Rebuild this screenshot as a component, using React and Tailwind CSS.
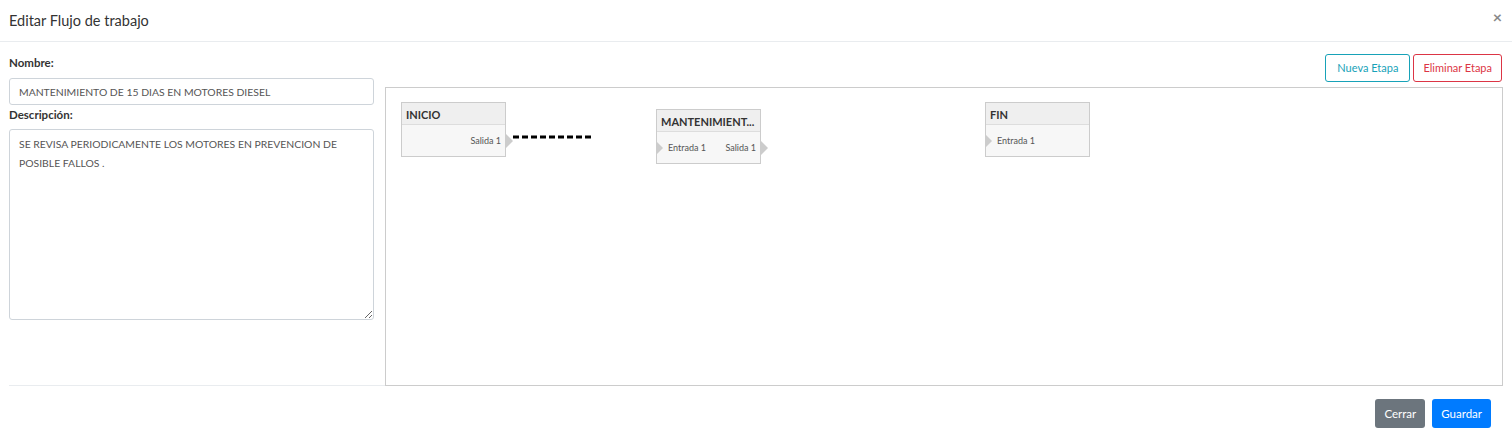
import React from 'react';

const FONT = { fontFamily: 'Lato, "Noto Sans", sans-serif' };

function Port({ side }) {
  return (
    <span
      className={`absolute top-1/2 -translate-y-1/2 w-0 h-0 border-y-[7px] border-y-transparent border-l-[7px] border-l-[#cccccc] ${
        side === 'left' ? '-left-px' : '-right-[8px]'
      }`}
    />
  );
}

function Node({ title, inputs = [], outputs = [], className }) {
  return (
    <div className={`absolute w-[105px] bg-[#f7f7f7] border border-[#cccccc] ${className}`}>
      <div className="h-[22px] px-1 pt-[3px] flex items-center bg-[#efefef] border-b border-[#dddddd] text-[11px] font-bold text-[#333] truncate">
        {title}
      </div>
      <div className="relative h-[31px] flex items-center justify-between px-[11px] text-[9px] text-[#555]">
        <span>
          {inputs.map((i) => (
            <span key={i}>{i}</span>
          ))}
        </span>
        <span className={outputs.length ? '-mr-[7px]' : ''}>
          {outputs.map((o) => (
            <span key={o}>{o}</span>
          ))}
        </span>
        {inputs.length > 0 && <Port side="left" />}
        {outputs.length > 0 && <Port side="right" />}
      </div>
    </div>
  );
}

export default function App() {
  return (
    <div className="w-[1512px] h-[447px] bg-white text-[#212529]" style={FONT}>
      {/* Header */}
      <div className="h-[42px] flex items-center justify-between pl-[9px] pr-[10px] border-b border-[#e9ecef]">
        <h5 className="text-[14.5px] text-[#333]">Editar Flujo de trabajo</h5>
        <button className="text-[16px] font-bold text-[#888] leading-none -mt-2">×</button>
      </div>

      {/* Body */}
      <div className="flex pl-[9px] pr-[10px] pt-[12px]">
        <div className="w-[365px] shrink-0">
          <label className="block text-[11.5px] font-bold text-[#333] h-[24px] leading-[18px]">Nombre:</label>
          <input
            readOnly
            value="MANTENIMIENTO DE 15 DIAS EN MOTORES DIESEL"
            className="block w-full h-[27px] px-[9px] text-[10.4px] text-[#555] border border-[#ced4da] rounded-[3px] outline-none"
            style={FONT}
          />
          <label className="block text-[11.5px] font-bold text-[#333] h-[24px] leading-[20px]">Descripción:</label>
          <textarea
            readOnly
            value="SE REVISA PERIODICAMENTE LOS MOTORES EN PREVENCION DE POSIBLE FALLOS ."
            className="block w-full h-[191px] px-[9px] py-[5px] text-[10.4px] leading-[19px] text-[#555] border border-[#ced4da] rounded-[3px] outline-none resize-y"
            style={FONT}
          />
        </div>

        <div className="flex-1 ml-[11px] flex flex-col">
          <div className="flex justify-end gap-[3px] h-[33px] pb-[5px]">
            <button className="h-[28px] px-[11px] text-[11px] text-[#17a2b8] border border-[#17a2b8] rounded-[3px]">
              Nueva Etapa
            </button>
            <button className="h-[28px] px-[9px] text-[11px] text-[#dc3545] border border-[#dc3545] rounded-[3px]">
              Eliminar Etapa
            </button>
          </div>
          <div className="relative h-[299px] border border-[#cccccc] -mr-px overflow-hidden">
            <Node title="INICIO" outputs={['Salida 1']} className="left-[15px] top-[14px]" />
            <svg className="absolute left-[127px] top-[46px]" width="80" height="6">
              <line x1="0" y1="3" x2="78" y2="3" stroke="#000" strokeWidth="3" strokeDasharray="6 3" />
            </svg>
            <Node
              title="MANTENIMIENT..."
              inputs={['Entrada 1']}
              outputs={['Salida 1']}
              className="left-[270px] top-[21px]"
            />
            <Node title="FIN" inputs={['Entrada 1']} className="left-[599px] top-[14px]" />
          </div>
        </div>
      </div>

      {/* Footer */}
      <div className="mx-[9px] border-t border-[#e9ecef] -mt-px flex justify-end gap-[7px] pt-[13px] pr-[12px]">
        <button className="h-[29px] px-[9px] text-[11.5px] text-white bg-[#6c757d] rounded-[3px]">Cerrar</button>
        <button className="h-[29px] px-[9px] text-[11.5px] text-white bg-[#007bff] rounded-[3px]">Guardar</button>
      </div>
    </div>
  );
}
